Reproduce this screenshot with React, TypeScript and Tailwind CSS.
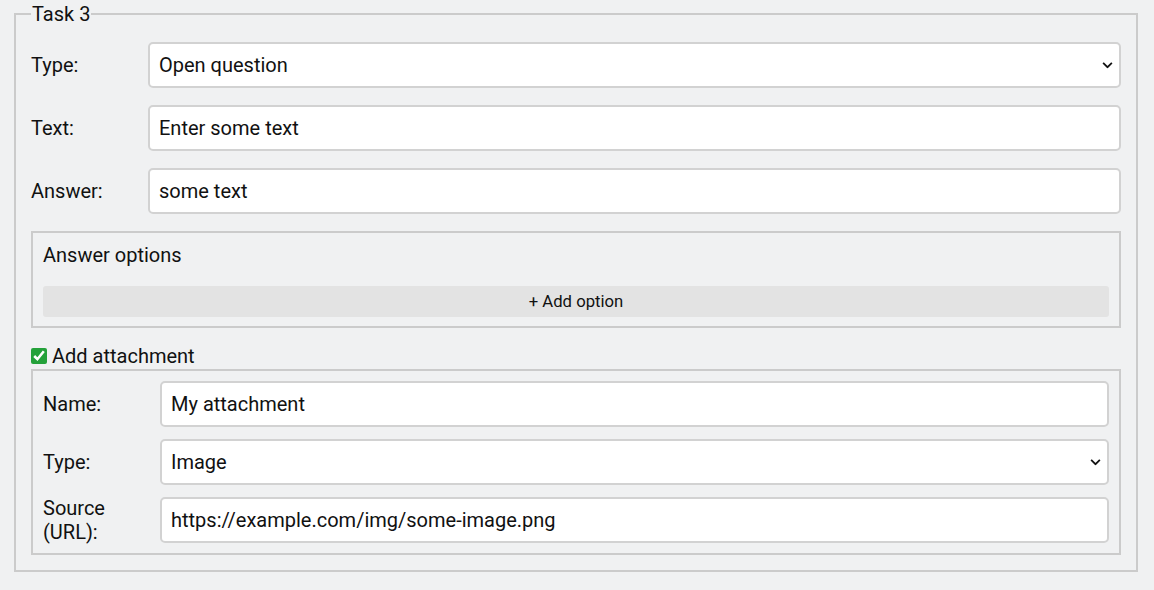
import React from "react";

const inputCls =
  "h-[46px] w-full rounded-[5px] border-2 border-[#d2d2d2] bg-white px-[9px] text-[20px] text-[#111] outline-none";
const selectCls =
  "h-[46px] w-full appearance-none rounded-[5px] border-2 border-[#d2d2d2] bg-white pl-[9px] pr-[30px] text-[20px] text-[#111] outline-none";

function Row({ label, children }: { label: React.ReactNode; children: React.ReactNode }) {
  return (
    <div className="flex h-[46px] items-center">
      <label className="w-[117px] shrink-0 pr-[10px] text-[20px] leading-[24px] text-[#111]">
        {label}
      </label>
      <div className="flex-1">{children}</div>
    </div>
  );
}

function Select({ value, options }: { value: string; options: string[] }) {
  return (
    <div className="relative">
      <select className={selectCls} defaultValue={value}>
        {options.map((o) => (
          <option key={o} value={o}>
            {o}
          </option>
        ))}
      </select>
      <svg
        viewBox="0 0 12 8"
        className="pointer-events-none absolute right-[8px] top-1/2 h-[7px] w-[11px] -translate-y-1/2"
        fill="none"
        stroke="#111"
        strokeWidth="2"
        aria-hidden="true"
      >
        <path d="M1 1.5l5 5 5-5" />
      </svg>
    </div>
  );
}

export default function App() {
  return (
    <div
      className="min-h-[590px] bg-[#f0f1f2] pl-[14px] pr-[16px] pt-[2px] pb-[16px]"
      style={{ fontFamily: "Roboto, 'Noto Sans', sans-serif" }}
    >
      <fieldset className="border-2 border-[#cbcbcb] pl-[15px] pr-[15px] pb-[15px] pt-[16px]">
        <legend className="px-px text-[20px] leading-[24px] text-[#111]">Task 3</legend>
        <div className="flex flex-col gap-[17px]">
          <Row label="Type:">
            <Select value="Open question" options={["Open question", "Multiple choice"]} />
          </Row>
          <Row label="Text:">
            <input className={inputCls} defaultValue="Enter some text" />
          </Row>
          <Row label="Answer:">
            <input className={inputCls} defaultValue="some text" />
          </Row>

          <div className="border-2 border-[#cbcbcb] px-[10px] pb-[9px] pt-[10px]">
            <div className="mb-[19px] text-[20px] leading-[24px] text-[#111]">Answer options</div>
            <button className="h-[31px] w-full rounded-[3px] bg-[#e3e3e3] text-[16.7px] text-[#111]">
              + Add option
            </button>
          </div>
        </div>

        <div className="mt-[16px] mb-[1px] flex items-center gap-[5px] text-[20px] leading-[24px] text-[#111]">
          <input type="checkbox" defaultChecked className="m-0 h-4 w-4 accent-[#24a13a]" />
          <span>Add attachment</span>
        </div>

        <div className="flex flex-col gap-[12px] border-2 border-[#cbcbcb] px-[10px] py-[10px]">
          <Row label="Name:">
            <input className={inputCls} defaultValue="My attachment" />
          </Row>
          <Row label="Type:">
            <Select value="Image" options={["Image", "Video"]} />
          </Row>
          <Row label="Source (URL):">
            <input className={inputCls} defaultValue="https://example.com/img/some-image.png" />
          </Row>
        </div>
      </fieldset>
    </div>
  );
}
